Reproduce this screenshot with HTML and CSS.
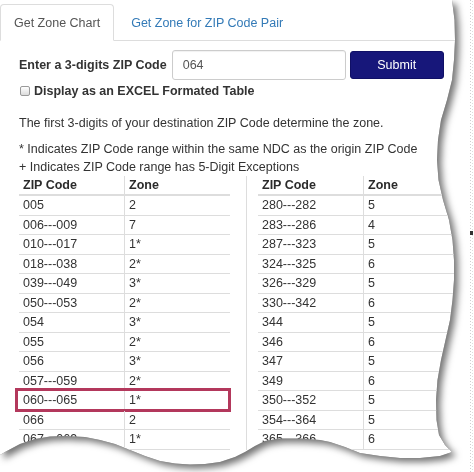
FILE: index.html
```html
<!DOCTYPE html>
<html lang="en">
<head>
<meta charset="utf-8">
<title>Get Zone Chart</title>
<link rel="stylesheet" href="styles.css">
</head>
<body>
<div class="page">
  <div class="sheet">
    <div class="paper">
      <ul class="tabs">
        <li class="tab active">Get Zone Chart</li>
        <li class="tab"><a class="tab-link" href="#">Get Zone for ZIP Code Pair</a></li>
      </ul>
      <div class="content">
        <form class="zip-form">
          <label class="zip-label" for="zip">Enter a 3-digits ZIP Code</label>
          <input class="zip-input" id="zip" type="text" value="064">
          <button class="submit" type="button">Submit</button>
        </form>
        <label class="excel"><input class="check" type="checkbox"><span>Display as an EXCEL Formated Table</span></label>
        <p class="intro">The first 3-digits of your destination ZIP Code determine the zone.</p>
        <p class="notes">* Indicates ZIP Code range within the same NDC as the origin ZIP Code<br>+ Indicates ZIP Code range has 5-Digit Exceptions</p>
        <div class="tables">
          <div class="col col-left">
            <div class="ztable">
              <div class="row head"><div class="c1">ZIP Code</div><div class="c2">Zone</div></div>
              <div class="row"><div class="c1">005</div><div class="c2">2</div></div>
              <div class="row"><div class="c1">006---009</div><div class="c2">7</div></div>
              <div class="row"><div class="c1">010---017</div><div class="c2">1*</div></div>
              <div class="row"><div class="c1">018---038</div><div class="c2">2*</div></div>
              <div class="row"><div class="c1">039---049</div><div class="c2">3*</div></div>
              <div class="row"><div class="c1">050---053</div><div class="c2">2*</div></div>
              <div class="row"><div class="c1">054</div><div class="c2">3*</div></div>
              <div class="row"><div class="c1">055</div><div class="c2">2*</div></div>
              <div class="row"><div class="c1">056</div><div class="c2">3*</div></div>
              <div class="row"><div class="c1">057---059</div><div class="c2">2*</div></div>
              <div class="row hl"><div class="c1">060---065</div><div class="c2">1*</div></div>
              <div class="row"><div class="c1">066</div><div class="c2">2</div></div>
              <div class="row"><div class="c1">067---069</div><div class="c2">1*</div></div>
            </div>
          </div>
          <div class="col col-right">
            <div class="ztable">
              <div class="row head"><div class="c1">ZIP Code</div><div class="c2">Zone</div></div>
              <div class="row"><div class="c1">280---282</div><div class="c2">5</div></div>
              <div class="row"><div class="c1">283---286</div><div class="c2">4</div></div>
              <div class="row"><div class="c1">287---323</div><div class="c2">5</div></div>
              <div class="row"><div class="c1">324---325</div><div class="c2">6</div></div>
              <div class="row"><div class="c1">326---329</div><div class="c2">5</div></div>
              <div class="row"><div class="c1">330---342</div><div class="c2">6</div></div>
              <div class="row"><div class="c1">344</div><div class="c2">5</div></div>
              <div class="row"><div class="c1">346</div><div class="c2">6</div></div>
              <div class="row"><div class="c1">347</div><div class="c2">5</div></div>
              <div class="row"><div class="c1">349</div><div class="c2">6</div></div>
              <div class="row"><div class="c1">350---352</div><div class="c2">5</div></div>
              <div class="row"><div class="c1">354---364</div><div class="c2">5</div></div>
              <div class="row"><div class="c1">365---366</div><div class="c2">6</div></div>
            </div>
          </div>
        </div>
      </div>
    </div>
  </div>
  <svg class="dots" width="6" height="472" viewBox="0 0 6 472" aria-hidden="true">
    <line x1="2.5" y1="0" x2="2.5" y2="472" stroke="#cfcfcf" stroke-width="1" stroke-dasharray="1 2"/>
    <line x1="4.5" y1="1" x2="4.5" y2="472" stroke="#dedede" stroke-width="1" stroke-dasharray="1 2"/>
    <rect x="2" y="231" width="3" height="4" fill="#333"/>
  </svg>
</div>
</body>
</html>
```

FILE: styles.css
```css
html, body {
  margin: 0;
  padding: 0;
  background: #ffffff;
}

body {
  font-family: "Liberation Sans", Arial, sans-serif;
  font-size: 12.5px;
  color: #333333;
}

.page {
  position: relative;
  width: 474px;
  height: 472px;
  overflow: hidden;
  background: #ffffff;
}

.sheet {
  filter: drop-shadow(0 0 0.5px rgba(0, 0, 0, 0.6)) drop-shadow(4px 4px 3.5px rgba(0, 0, 0, 0.55));
}

.paper {
  height: 472px;
  background: #ffffff;
  clip-path: polygon(
    0 0, 452px 0, 454.5px 20px, 455px 40px, 454px 60px, 452px 80px, 447px 100px,
    441px 120px, 438px 140px, 437px 160px, 438.5px 180px, 443px 200px, 449px 220px,
    452.5px 240px, 454px 260px, 454px 280px, 452.5px 300px, 450px 320px, 445.5px 340px,
    441px 360px, 437.5px 380px, 436px 400px, 436.5px 420px, 439px 435px, 445px 445px,
    452px 452px, 440px 456px, 420px 458px, 400px 458px, 380px 456px, 360px 453px,
    345px 447px, 330px 442px, 320px 440px, 300px 438.5px, 280px 438.5px, 265px 441px,
    255px 446px, 245px 452px, 235px 457px, 220px 462px, 205px 464px, 190px 464.5px,
    175px 463.5px, 160px 461px, 145px 456px, 130px 450px, 115px 444px, 100px 440px,
    85px 437px, 65px 436px, 50px 436.5px, 35px 439px, 20px 444px, 5px 452px, 0 455px
  );
}

.tabs {
  display: flex;
  margin: 0;
  padding: 4px 0 0 0;
  list-style: none;
  border-bottom: 1px solid #dddddd;
}

.tab {
  padding: 8.5px 13px;
  line-height: 18px;
  border: 1px solid transparent;
  margin-bottom: -1px;
  border-radius: 4px 4px 0 0;
}

.tab.active {
  color: #555555;
  background: #ffffff;
  border-color: #dddddd;
  border-bottom-color: transparent;
}

.tab + .tab {
  margin-left: 2px;
  padding-left: 14px;
}

.tab-link {
  color: #337ab7;
  text-decoration: none;
}

.content {
  padding-left: 19px;
}

.zip-form {
  display: flex;
  align-items: center;
  margin: 9px 0 0 0;
}

.zip-label {
  font-weight: bold;
  color: #333333;
  margin-right: 5px;
}

.zip-input {
  box-sizing: border-box;
  width: 174px;
  height: 30px;
  border: 1px solid #cccccc;
  border-radius: 3px;
  padding: 0 10px;
  font-family: inherit;
  font-size: 12.5px;
  color: #555555;
  box-shadow: inset 0 1px 1px rgba(0, 0, 0, 0.06);
}

.submit {
  box-sizing: border-box;
  width: 94px;
  height: 28px;
  margin-left: 4px;
  border: 1px solid #101066;
  border-radius: 3px;
  background: #17177a;
  color: #ffffff;
  font-family: inherit;
  font-size: 12.5px;
  padding: 0;
}

.excel {
  display: flex;
  align-items: center;
  margin-top: 2px;
  line-height: 18px;
  font-weight: bold;
}

.check {
  appearance: none;
  -webkit-appearance: none;
  box-sizing: border-box;
  width: 10px;
  height: 10px;
  margin: 0 4px 0 1px;
  border: 1px solid #9a9a9a;
  border-radius: 2px;
  background: linear-gradient(#ffffff, #dcdcdc);
}

.intro {
  margin: 14px 0 0 0;
  line-height: 18px;
}

.notes {
  margin: 8px 0 0 0;
  line-height: 18px;
}

.tables {
  display: flex;
  align-items: stretch;
}

.col-left {
  width: 227px;
}

.col-right {
  border-left: 1px solid #dddddd;
  padding-left: 11px;
}

.ztable {
  width: 211px;
}

.row {
  position: relative;
  display: flex;
  line-height: 18.5px;
  border-bottom: 1px solid #dddddd;
}

.row.head {
  line-height: 18px;
  border-bottom: 2px solid #dddddd;
  font-weight: bold;
  color: #2b2b2b;
}

.c1 {
  width: 105px;
  padding-left: 4px;
  box-sizing: border-box;
}

.c2 {
  flex: 1;
  padding-left: 4px;
  border-left: 1px solid #dddddd;
}

.row.hl::after {
  content: "";
  position: absolute;
  top: -3px;
  right: -1px;
  bottom: -2px;
  left: -4px;
  border: 3px solid #b3385c;
}

.dots {
  position: absolute;
  top: 0;
  right: 0;
}
```
